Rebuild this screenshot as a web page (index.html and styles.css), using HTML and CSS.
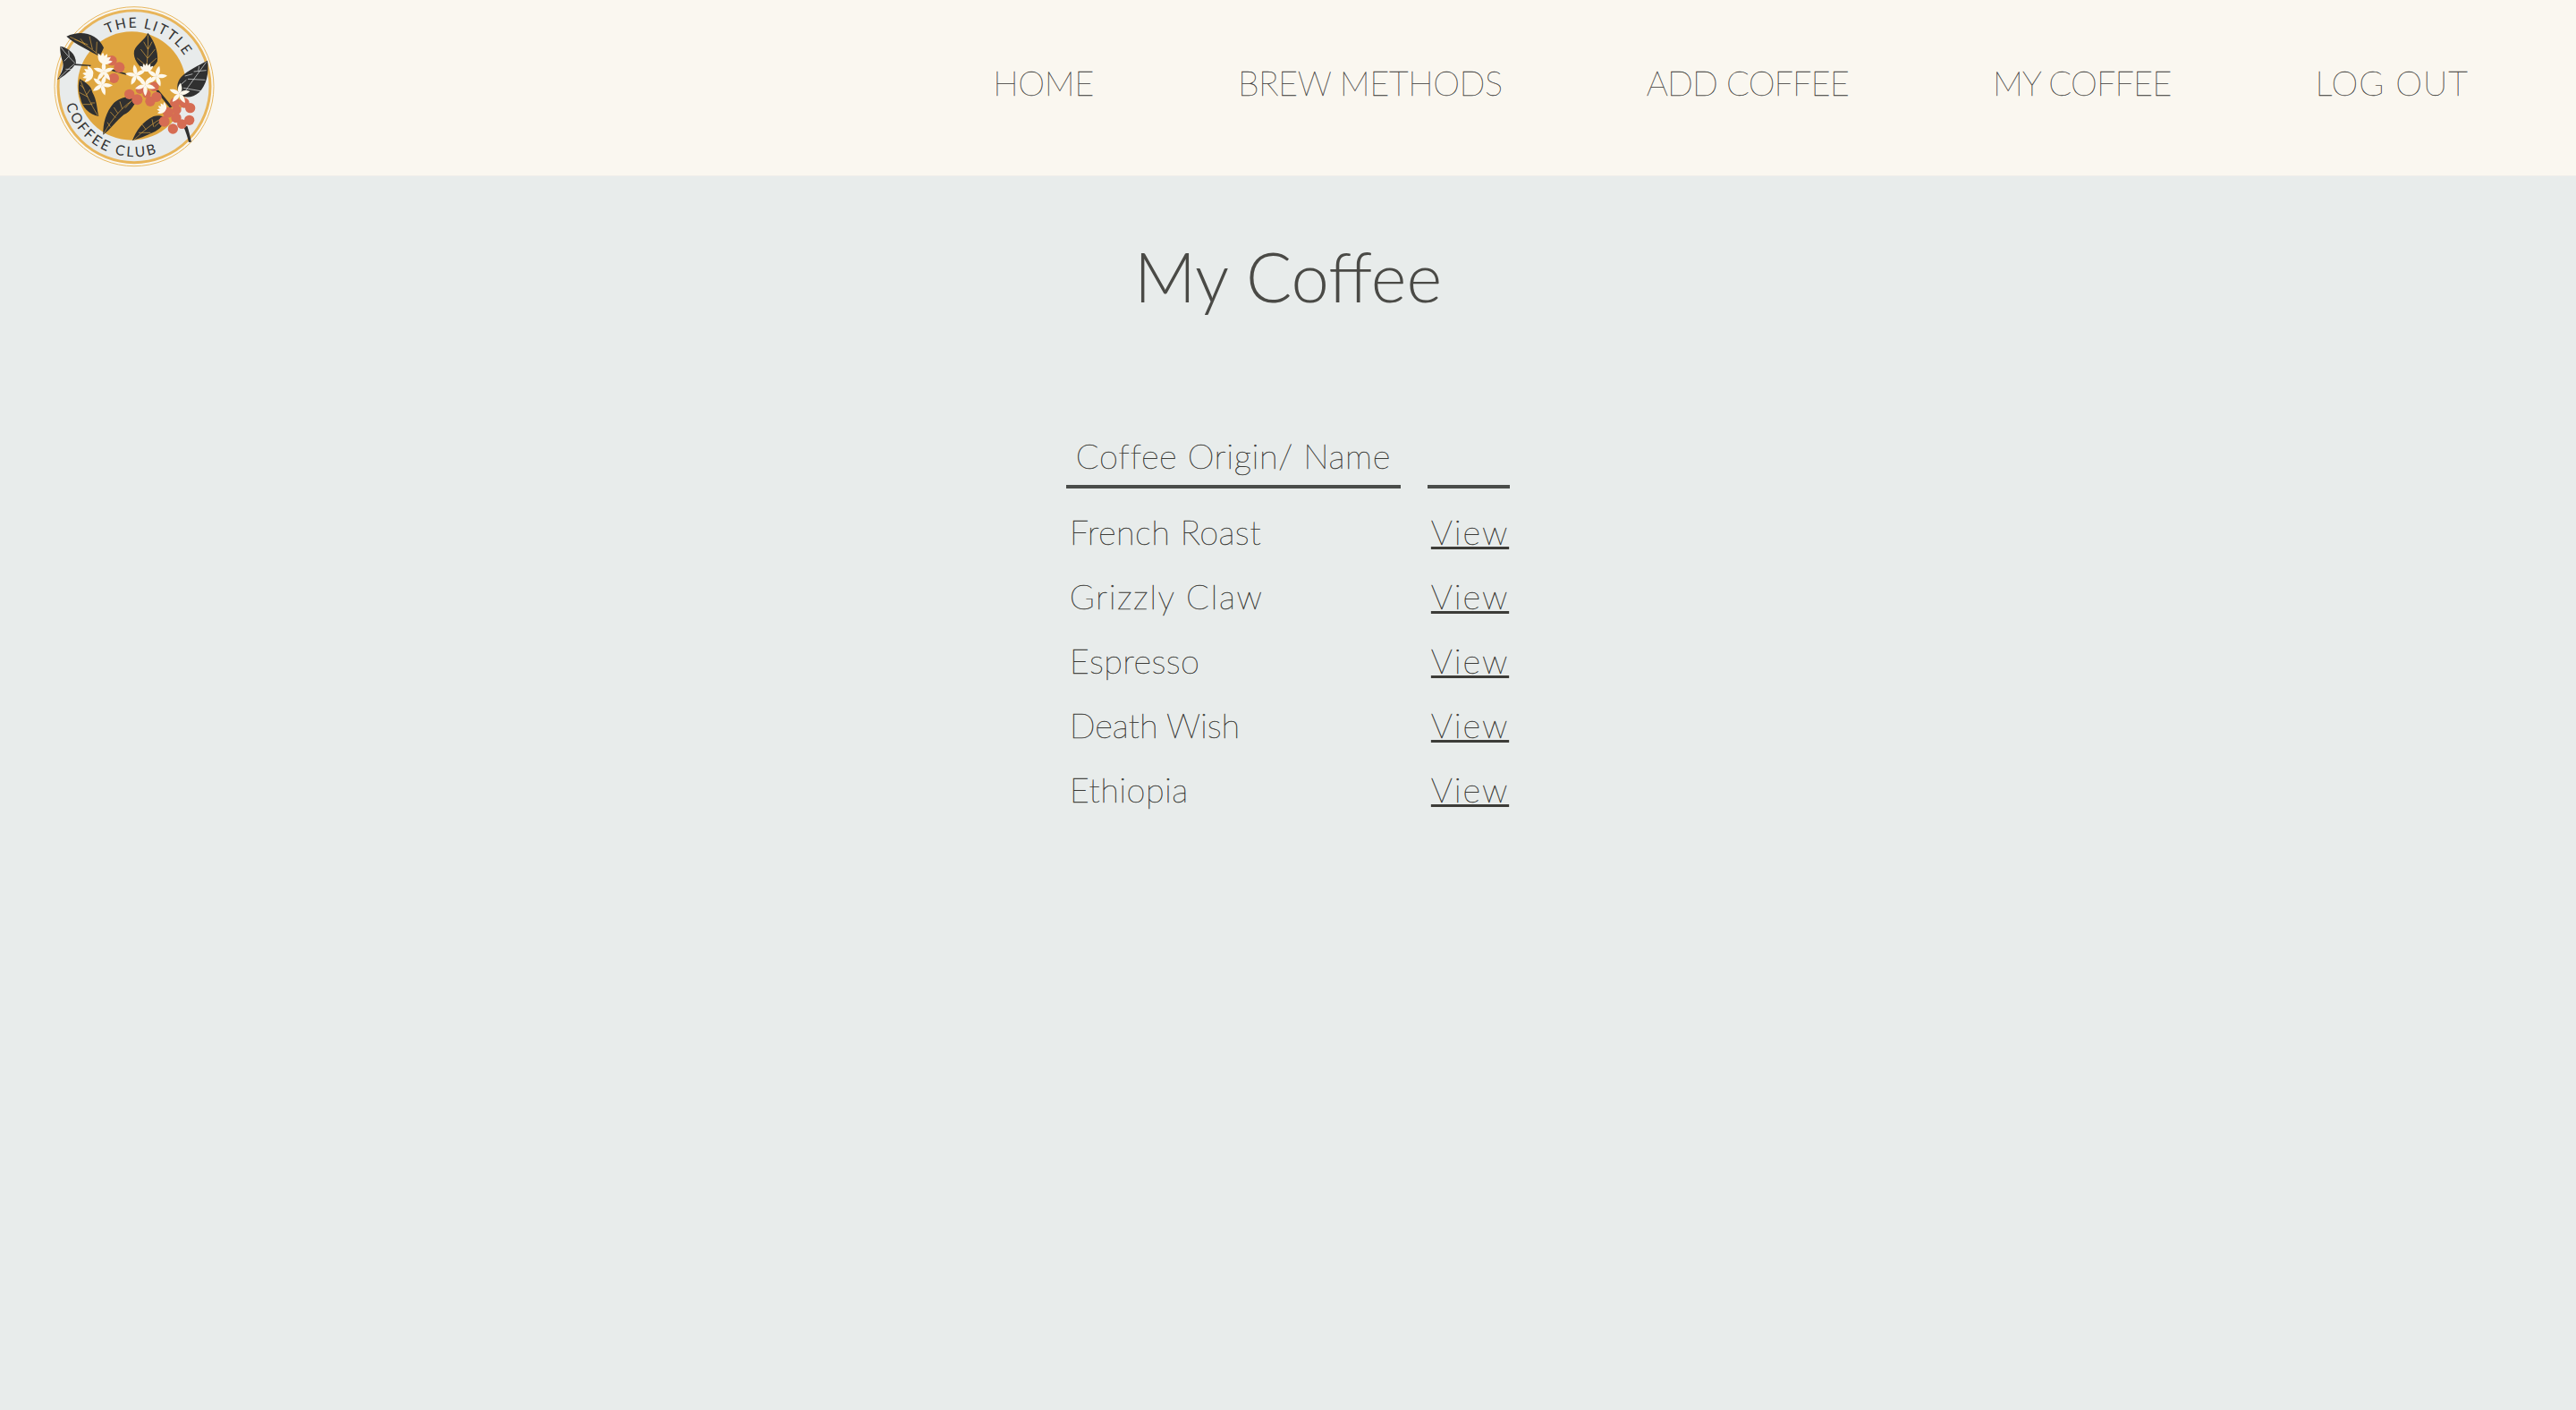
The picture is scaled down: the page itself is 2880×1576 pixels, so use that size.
FILE: index.html
```html
<!DOCTYPE html>
<html lang="en">
<head>
<meta charset="utf-8">
<title>My Coffee</title>
<link rel="stylesheet" href="styles.css">
</head>
<body>
<header class="site-header">
  <a class="logo" href="#" aria-label="The Little Coffee Club">
    <svg class="logo-svg" viewBox="0 0 660 600" width="220" height="200">
      <defs>
        <path id="arc-top" d="M 240 114 A 198 198 0 0 1 503 194"/>
        <path id="arc-bottom" d="M 102 351 A 236 236 0 0 0 420 508"/>
        <path id="petal" d="M0 0C-10 -9 -8 -24 0 -36C8 -24 10 -9 0 0Z"/>
        <g id="flower">
          <use href="#petal"/>
          <use href="#petal" transform="rotate(72)"/>
          <use href="#petal" transform="rotate(144)"/>
          <use href="#petal" transform="rotate(216)"/>
          <use href="#petal" transform="rotate(288)"/>
        </g>
        <g id="bud">
          <use href="#petal" transform="rotate(-50)"/>
          <use href="#petal" transform="rotate(-25)"/>
          <use href="#petal"/>
          <use href="#petal" transform="rotate(25)"/>
          <use href="#petal" transform="rotate(50)"/>
        </g>
      </defs>
      <circle cx="330" cy="290" r="267" fill="none" stroke="#e8b860" stroke-width="3"/>
      <circle cx="330" cy="290" r="255" fill="#e8ebeb" stroke="#e8b55a" stroke-width="9"/>
      <circle cx="322" cy="288" r="182" fill="#dfa63f"/>
      <text class="logo-text"><textPath href="#arc-top" textLength="295">THE LITTLE</textPath></text>
      <text class="logo-text"><textPath href="#arc-bottom" textLength="385">COFFEE CLUB</textPath></text>
      <g fill="#303030">
        <path d="M103 122C150 100 205 110 228 160C222 175 218 180 215 190C185 172 135 150 103 122Z"/>
        <path d="M82 155C110 160 135 180 135 212C120 235 95 255 72 268C90 240 95 225 90 205C85 190 80 170 82 155Z"/>
        <path d="M147 265C165 275 185 285 190 310C205 335 205 365 211 390C180 385 155 360 150 330C142 305 142 285 147 265Z"/>
        <path d="M376 110C395 135 412 170 408 205C402 220 385 232 370 238C345 225 325 195 330 170C340 145 365 135 376 110Z"/>
        <path d="M576 203C582 245 572 285 548 310C530 325 510 330 490 322C468 305 472 275 488 258C510 235 545 220 576 203Z"/>
        <path d="M226 452C225 415 235 375 262 345C285 325 315 320 342 325C335 345 320 375 295 385C270 405 250 435 226 452Z"/>
        <path d="M324 472C335 440 360 405 395 390C410 385 420 388 432 392C435 415 415 435 392 445C370 455 345 465 324 472Z"/>
        <path d="M130 214L185 218L184 222L130 219Z"/>
        <path d="M255 232L305 247L303 251L253 237Z"/>
        <path d="M402 303L412 302L458 358L450 362Z"/>
      </g>
      <path d="M496 425L508 422C514 440 518 458 522 476L513 477C509 458 503 442 496 425Z" fill="#303030"/>
      <g class="veins gold">
        <path d="M115 124C155 140 190 165 215 188M150 130L165 150M180 122L190 165M205 140L203 178M130 132L175 150"/>
        <path d="M376 118C378 160 375 200 370 235M352 165L375 195M400 165L376 195M340 195L372 222M405 195L374 222M362 140L376 165M390 140L377 165"/>
        <path d="M150 270C165 310 185 350 208 388M146 310L175 325M158 350L190 350M183 300L170 318M150 285L162 298M198 345L185 345"/>
        <path d="M228 448C255 400 295 350 340 327M250 375L268 395M282 340L290 365M320 340L300 362M240 410L250 425M262 360L275 380"/>
        <path d="M328 470C360 440 395 410 430 393M355 415L370 435M390 400L395 425M415 410L398 425M345 445L385 445"/>
      </g>
      <g class="veins pale">
        <path d="M572 208C545 245 515 285 492 320M530 240L572 236M510 265L568 268M495 295L552 305M548 222L545 238M500 255L526 248M485 285L505 268"/>
        <path d="M84 158C100 180 115 195 132 212M95 205L110 190M78 262C95 245 112 228 130 214M110 170L112 190M100 232L125 232"/>
      </g>
      <g fill="#d66c53">
        <circle cx="255" cy="203" r="17"/><circle cx="280" cy="226" r="18"/><circle cx="262" cy="262" r="17"/>
        <circle cx="314" cy="316" r="17"/><circle cx="340" cy="334" r="18"/><circle cx="350" cy="300" r="15"/>
        <circle cx="372" cy="315" r="14"/><circle cx="384" cy="340" r="17"/><circle cx="405" cy="325" r="17"/>
        <circle cx="397" cy="290" r="16"/><circle cx="467" cy="344" r="17"/><circle cx="498" cy="345" r="17"/>
        <circle cx="518" cy="362" r="17"/><circle cx="473" cy="368" r="15"/><circle cx="444" cy="377" r="18"/>
        <circle cx="471" cy="395" r="17"/><circle cx="431" cy="407" r="18"/><circle cx="515" cy="403" r="17"/>
        <circle cx="490" cy="416" r="16"/><circle cx="460" cy="432" r="17"/>
      </g>
      <g fill="#fdf8ec">
        <use href="#bud" transform="translate(222 212) rotate(30)"/>
        <use href="#bud" transform="translate(192 252) rotate(-80)"/>
        <use href="#flower" transform="translate(228 240)"/>
        <use href="#flower" transform="translate(222 285) rotate(20)"/>
        <use href="#bud" transform="translate(372 240) scale(.8)"/>
        <use href="#flower" transform="translate(336 252) rotate(-10)"/>
        <use href="#flower" transform="translate(405 256) rotate(15)"/>
        <use href="#flower" transform="translate(367 286) rotate(35)"/>
        <use href="#flower" transform="translate(482 314) rotate(5)"/>
        <use href="#bud" transform="translate(435 370) rotate(-60) scale(.8)"/>
      </g>
    </svg>
  </a>
  <nav class="main-nav">
    <a href="#">HOME</a>
    <a href="#">BREW METHODS</a>
    <a class="tight" href="#">ADD COFFEE</a>
    <a class="tight" href="#">MY COFFEE</a>
    <a class="loose" href="#">LOG OUT</a>
  </nav>
</header>
<main class="content">
  <h1 class="page-title">My Coffee</h1>
  <table class="coffee-table">
    <thead>
      <tr><th>Coffee Origin/ Name</th><th></th></tr>
    </thead>
    <tbody>
      <tr><td>French Roast</td><td><a href="#">View</a></td></tr>
      <tr><td class="wide">Grizzly Claw</td><td><a href="#">View</a></td></tr>
      <tr><td>Espresso</td><td><a href="#">View</a></td></tr>
      <tr><td class="narrow">Death Wish</td><td><a href="#">View</a></td></tr>
      <tr><td>Ethiopia</td><td><a href="#">View</a></td></tr>
    </tbody>
  </table>
</main>
</body>
</html>
```
FILE: styles.css
```css
* { box-sizing: border-box; }
html, body { height: 100%; }
body {
  margin: 0;
  background: #e8eceb;
  color: #4a4a46;
  font-family: "Lato", "Liberation Sans", sans-serif;
  font-weight: 300;
}
a { color: inherit; }
.site-header {
  height: 197px;
  display: flex;
  justify-content: space-between;
  align-items: flex-start;
  background: #faf7f0;
  border-bottom: 1px solid #f0eeea;
  padding: 0 120px 0 40px;
}
.logo { display: block; }
.logo-svg { display: block; }
.logo-text { font: 400 47px "Lato", sans-serif; fill: #333; }
.veins { fill: none; stroke-width: 2; }
.gold { stroke: #dfa63f; }
.pale { stroke: #e8ebeb; }
.main-nav { display: flex; gap: 161px; padding-top: 70px; }
.main-nav a { font-size: 38px; line-height: 44px; font-weight: 100; color: #3a3a37; -webkit-text-stroke: 0.3px #3a3a37; letter-spacing: -0.4px; text-decoration: none; }
.main-nav .tight { letter-spacing: -0.9px; }
.main-nav .loose { letter-spacing: 1px; }
.content { display: flex; flex-direction: column; align-items: center; }
.page-title { margin: 66px 0 0; font-size: 76px; line-height: 92px; font-weight: 300; }
.coffee-table { margin-top: 130px; border-collapse: separate; border-spacing: 30px 0; font-weight: 100; color: #3c3c38; -webkit-text-stroke: 0.45px #3c3c38; }
.coffee-table th { padding: 0 11px 9px; font-size: 38px; line-height: 48px; font-weight: 100; letter-spacing: 0.6px; border-bottom: 4px solid #4a4d4a; min-width: 92px; }
.coffee-table td { padding: 0 4px; font-size: 38px; letter-spacing: 0.4px; height: 72px; }
.coffee-table td + td { padding-right: 1px; }
.coffee-table .wide { letter-spacing: 1.5px; }
.coffee-table .narrow { letter-spacing: -0.1px; }
.coffee-table td a { letter-spacing: 1.8px; }
.coffee-table tbody tr:first-child td { padding-top: 12px; height: 84px; }
```
